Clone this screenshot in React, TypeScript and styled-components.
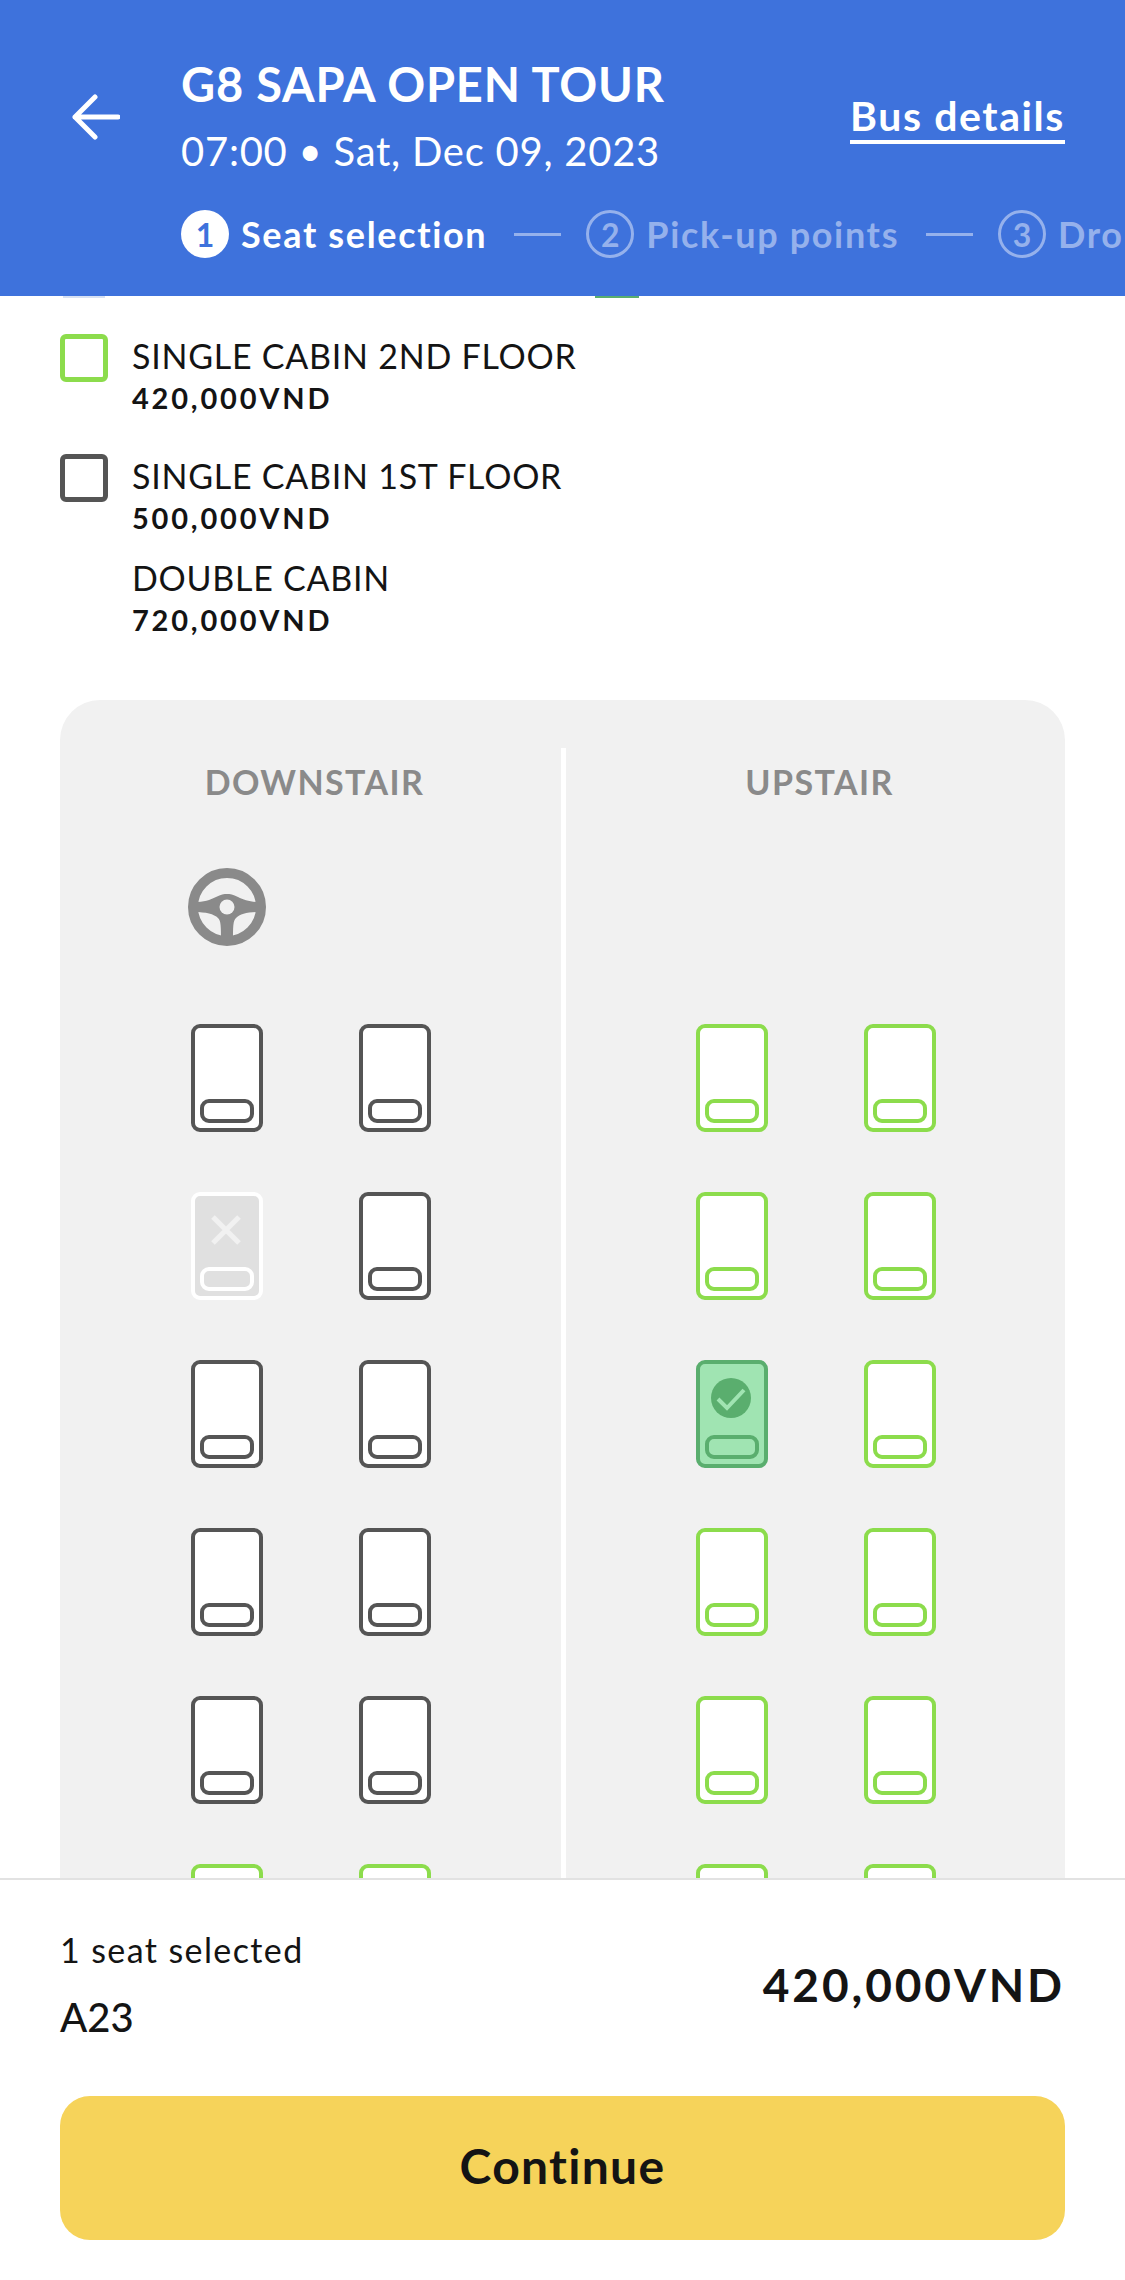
import React from "react";
import styled, { createGlobalStyle } from "styled-components";

const FONT = `Lato, "Noto Sans", "Liberation Sans", sans-serif`;

type SeatState = "free" | "open" | "taken" | "picked";

const seatColors: Record<SeatState, { line: string; fill: string }> = {
  free: { line: "#555555", fill: "#ffffff" },
  open: { line: "#8cdc4c", fill: "#ffffff" },
  taken: { line: "#ffffff", fill: "#e0e0e0" },
  picked: { line: "#5aae6e", fill: "#a0e4b2" },
};

const downstairs: SeatState[] = ["free", "free", "taken", "free", "free", "free", "free", "free", "free", "free", "open", "open"];
const upstairs: SeatState[] = ["open", "open", "open", "open", "picked", "open", "open", "open", "open", "open", "open", "open"];

const tickets = [
  { name: "SINGLE CABIN 2ND FLOOR", price: "420,000VND", box: "#8cdc4c", rowHeight: 120 },
  { name: "SINGLE CABIN 1ST FLOOR", price: "500,000VND", box: "#555555", rowHeight: 102 },
  { name: "DOUBLE CABIN", price: "720,000VND", box: "", rowHeight: 0 },
];

const GlobalStyle = createGlobalStyle`
  html, body {
    margin: 0;
    padding: 0;
    background: #ffffff;
  }
  * {
    box-sizing: border-box;
  }
`;

const Screen = styled.div`
  width: 1125px;
  height: 2280px;
  display: flex;
  flex-direction: column;
  overflow: hidden;
  background: #ffffff;
  font-family: ${FONT};
  color: #141414;
`;

const Header = styled.header`
  height: 296px;
  flex: none;
  background: #3e72dc;
  color: #ffffff;
  padding: 55px 0 0 72px;
  display: grid;
  grid-template-columns: 109px 1fr auto;
  grid-template-rows: 118px auto;
  overflow: hidden;
`;

const BackBtn = styled.div`
  align-self: center;
  height: 46px;
  margin-top: 5px;
  svg {
    display: block;
  }
`;

const TripInfo = styled.div`
  display: flex;
  flex-direction: column;
`;

const TripName = styled.div`
  margin-top: 1px;
  font-size: 47px;
  line-height: 56px;
  font-weight: 700;
  letter-spacing: 0.8px;
  white-space: nowrap;
`;

const TripTime = styled.div`
  font-size: 40px;
  line-height: 50px;
  margin-top: 14px;
  letter-spacing: 0.75px;
  white-space: nowrap;
`;

const DetailsLink = styled.a`
  align-self: center;
  margin: 8px 60px 0 0;
  font-size: 41px;
  line-height: 48px;
  font-weight: 700;
  letter-spacing: 1.6px;
  border-bottom: 4px solid #ffffff;
  white-space: nowrap;
`;

const Steps = styled.div`
  grid-column: 2 / 4;
  align-self: start;
  height: 48px;
  margin-top: 37px;
  display: flex;
  align-items: center;
  white-space: nowrap;
`;

const StepBadge = styled.span<{ $on?: boolean }>`
  flex: none;
  width: 48px;
  height: 48px;
  border-radius: 50%;
  display: flex;
  align-items: center;
  justify-content: center;
  font-size: 32px;
  font-weight: 700;
  background: ${({ $on }) => ($on ? "#ffffff" : "transparent")};
  color: ${({ $on }) => ($on ? "#3e72dc" : "#95b1ec")};
  border: ${({ $on }) => ($on ? "none" : "3px solid #95b1ec")};
`;

const StepLabel = styled.span<{ $on?: boolean }>`
  margin-left: 12px;
  font-size: 36px;
  line-height: 48px;
  font-weight: 700;
  letter-spacing: 1.65px;
  color: ${({ $on }) => ($on ? "#ffffff" : "#95b1ec")};
`;

const StepDash = styled.span`
  flex: none;
  width: 47px;
  height: 3px;
  margin: 0 25px 0 27px;
  background: #95b1ec;
`;

const Body = styled.main`
  flex: 1;
  min-height: 0;
  overflow: hidden;
  padding: 0 60px;
`;

const ClippedRow = styled.div`
  height: 2px;
  overflow: hidden;
  display: flex;
`;

const ClippedSwatch = styled.span<{ $color: string; $gap: number; $w: number }>`
  width: ${({ $w }) => $w}px;
  height: 2px;
  margin-left: ${({ $gap }) => $gap}px;
  background: ${({ $color }) => $color};
`;

const Tickets = styled.div`
  padding-top: 36px;
  display: flex;
  flex-direction: column;
`;

const TicketRow = styled.div<{ $height: number }>`
  display: flex;
  gap: 24px;
  height: ${({ $height }) => ($height ? `${$height}px` : "auto")};
`;

const TicketBox = styled.span<{ $color: string }>`
  flex: none;
  width: 48px;
  height: 48px;
  border-radius: 6px;
  border: ${({ $color }) => ($color ? `5px solid ${$color}` : "none")};
`;

const TicketText = styled.div`
  display: flex;
  flex-direction: column;
`;

const TicketName = styled.div`
  margin-top: 1px;
  font-size: 34px;
  line-height: 42px;
  letter-spacing: 0.75px;
  white-space: nowrap;
`;

const TicketPrice = styled.div`
  margin-top: 3px;
  font-size: 29px;
  line-height: 36px;
  font-weight: 700;
  letter-spacing: 2.8px;
  white-space: nowrap;
`;

const SeatPanel = styled.section`
  margin-top: 62px;
  padding-top: 48px;
  height: 1300px;
  background: #f1f1f1;
  border-radius: 40px 40px 0 0;
  display: grid;
  grid-template-columns: 501px 5px 1fr;
`;

const Divider = styled.div`
  background: #ffffff;
`;

const Deck = styled.div`
  display: flex;
  flex-direction: column;
  align-items: center;
`;

const DeckTitle = styled.div`
  margin-top: 14px;
  padding-left: 8px;
  font-size: 34px;
  line-height: 40px;
  font-weight: 700;
  letter-spacing: 1.4px;
  color: #8a8a8a;
`;

const SeatGrid = styled.div`
  margin-top: 66px;
  display: grid;
  grid-template-columns: 72px 72px;
  column-gap: 96px;
  row-gap: 60px;
`;

const WheelSlot = styled.div`
  grid-column: 1 / 3;
  height: 78px;
  margin: 0 0 18px -3px;
  svg {
    display: block;
  }
`;

const Seat = styled.div<{ $state: SeatState }>`
  position: relative;
  width: 72px;
  height: 108px;
  border-radius: 9px;
  border: 4.5px solid ${({ $state }) => seatColors[$state].line};
  background: ${({ $state }) => seatColors[$state].fill};
  display: flex;
  flex-direction: column;
  align-items: center;
  justify-content: flex-end;
  padding-bottom: 5px;
`;

const SeatCushion = styled.span<{ $state: SeatState }>`
  width: 54px;
  height: 24px;
  border-radius: 9px;
  border: 4.5px solid ${({ $state }) => seatColors[$state].line};
`;

const SeatMark = styled.span`
  position: absolute;
  top: 14px;
  left: 11.5px;
  width: 40px;
  height: 40px;
  svg {
    display: block;
  }
`;

const Footer = styled.footer`
  flex: none;
  height: 402px;
  border-top: 2px solid #e2e2e2;
  padding: 50px 60px 0;
  background: #ffffff;
`;

const Summary = styled.div`
  height: 166px;
  display: flex;
  justify-content: space-between;
  align-items: flex-start;
`;

const SummaryLeft = styled.div`
  display: flex;
  flex-direction: column;
`;

const SeatCount = styled.div`
  font-size: 34px;
  line-height: 40px;
  letter-spacing: 1.4px;
`;

const SeatCode = styled.div`
  margin-top: 23px;
  font-size: 40px;
  line-height: 48px;
  font-weight: 500;
`;

const Total = styled.div`
  margin-top: 28px;
  font-size: 46px;
  line-height: 54px;
  font-weight: 700;
  letter-spacing: 2.9px;
`;

const ContinueBtn = styled.button`
  display: block;
  width: 100%;
  height: 144px;
  padding: 0 0 6px;
  border: none;
  border-radius: 30px;
  background: #f6d35a;
  font-family: ${FONT};
  font-size: 48px;
  font-weight: 700;
  letter-spacing: 1.3px;
  color: #141414;
`;

const BackArrow = () => (
  <svg width="48" height="46" viewBox="0 0 48 46" fill="none" stroke="#ffffff" strokeWidth="5" strokeLinecap="round" strokeLinejoin="round">
    <path d="M46 23H3M23 3 3 23l20 20" />
  </svg>
);

const SteeringWheel = () => (
  <svg width="78" height="78" viewBox="0 0 78 78">
    <circle cx="39" cy="39" r="34" fill="none" stroke="#8a8a8a" strokeWidth="10" />
    <path
      d="M6 34C16 34 22 32 28 29C33 26.5 36 26 39 26C42 26 45 26.5 50 29C56 32 62 34 72 34V44C60 44 52 46 48 50C45 53 45 58 45 74H33C33 58 33 53 30 50C26 46 18 44 6 44Z"
      fill="#8a8a8a"
    />
    <circle cx="39" cy="39" r="7.5" fill="#f1f1f1" />
  </svg>
);

const SeatIcon = ({ state }: { state: SeatState }) => (
  <Seat $state={state}>
    {state === "taken" && (
      <SeatMark>
        <svg width="40" height="40" viewBox="0 0 40 40" stroke="#f1f1f1" strokeWidth="5">
          <path d="M7 7l26 26M33 7 7 33" />
        </svg>
      </SeatMark>
    )}
    {state === "picked" && (
      <SeatMark>
        <svg width="40" height="40" viewBox="0 0 40 40" fill="none">
          <circle cx="20" cy="20" r="20" fill="#5aae6e" />
          <path d="M7 21l9 9 17-18" stroke="#a0e4b2" strokeWidth="4" />
        </svg>
      </SeatMark>
    )}
    <SeatCushion $state={state} />
  </Seat>
);

export default function App() {
  return (
    <Screen>
      <GlobalStyle />
      <Header>
        <BackBtn>
          <BackArrow />
        </BackBtn>
        <TripInfo>
          <TripName>G8 SAPA OPEN TOUR</TripName>
          <TripTime>07:00 • Sat, Dec 09, 2023</TripTime>
        </TripInfo>
        <DetailsLink>Bus details</DetailsLink>
        <Steps>
          <StepBadge $on>1</StepBadge>
          <StepLabel $on>Seat selection</StepLabel>
          <StepDash />
          <StepBadge>2</StepBadge>
          <StepLabel>Pick-up points</StepLabel>
          <StepDash />
          <StepBadge>3</StepBadge>
          <StepLabel>Drop-off points</StepLabel>
        </Steps>
      </Header>
      <Body>
        <ClippedRow>
          <ClippedSwatch $color="#d7e1f3" $gap={3} $w={42} />
          <ClippedSwatch $color="#5aae6e" $gap={490} $w={44} />
        </ClippedRow>
        <Tickets>
          {tickets.map((t) => (
            <TicketRow key={t.name} $height={t.rowHeight}>
              <TicketBox $color={t.box} />
              <TicketText>
                <TicketName>{t.name}</TicketName>
                <TicketPrice>{t.price}</TicketPrice>
              </TicketText>
            </TicketRow>
          ))}
        </Tickets>
        <SeatPanel>
          <Deck>
            <DeckTitle>DOWNSTAIR</DeckTitle>
            <SeatGrid>
              <WheelSlot>
                <SteeringWheel />
              </WheelSlot>
              {downstairs.map((s, i) => (
                <SeatIcon key={i} state={s} />
              ))}
            </SeatGrid>
          </Deck>
          <Divider />
          <Deck>
            <DeckTitle>UPSTAIR</DeckTitle>
            <SeatGrid>
              <WheelSlot />
              {upstairs.map((s, i) => (
                <SeatIcon key={i} state={s} />
              ))}
            </SeatGrid>
          </Deck>
        </SeatPanel>
      </Body>
      <Footer>
        <Summary>
          <SummaryLeft>
            <SeatCount>1 seat selected</SeatCount>
            <SeatCode>A23</SeatCode>
          </SummaryLeft>
          <Total>420,000VND</Total>
        </Summary>
        <ContinueBtn>Continue</ContinueBtn>
      </Footer>
    </Screen>
  );
}
